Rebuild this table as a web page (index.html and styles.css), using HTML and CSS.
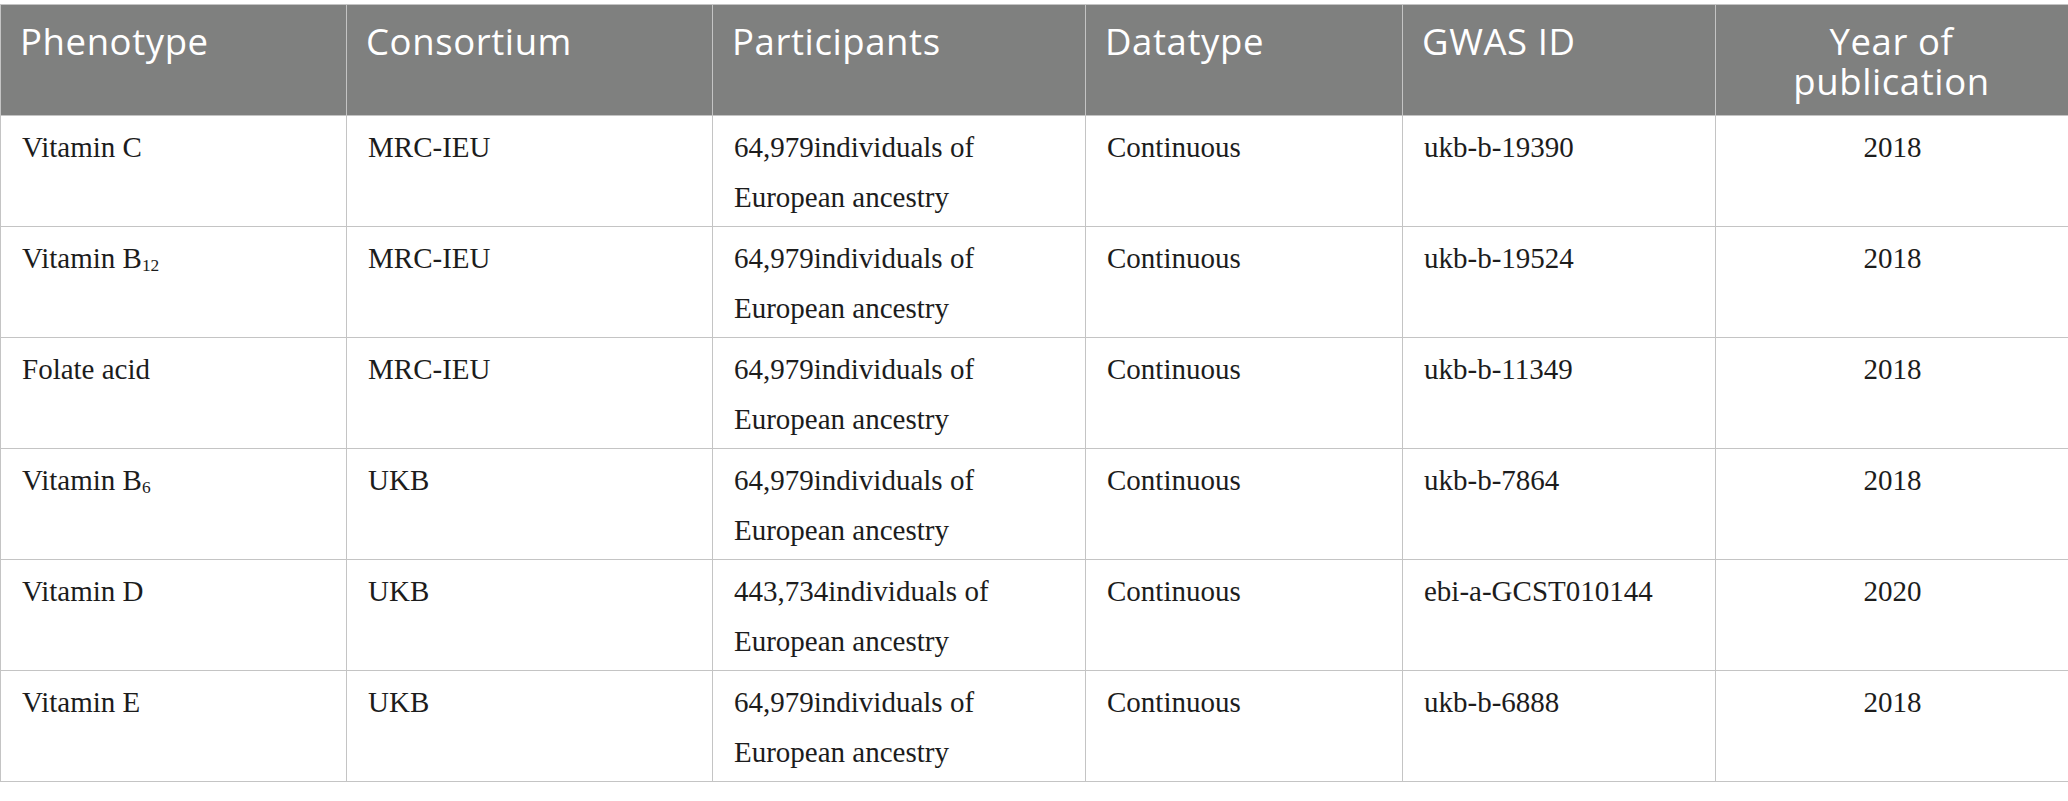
FILE: index.html
```html
<!DOCTYPE html>
<html lang="en">
<head>
<meta charset="utf-8">
<title>GWAS data sources</title>
<link rel="stylesheet" href="styles.css">
</head>
<body>
<div class="wrap">
<table class="data">
  <colgroup>
    <col class="c1"><col class="c2"><col class="c3"><col class="c4"><col class="c5"><col class="c6">
  </colgroup>
  <thead>
    <tr>
      <th>Phenotype</th>
      <th>Consortium</th>
      <th>Participants</th>
      <th>Datatype</th>
      <th>GWAS ID</th>
      <th class="center">Year of publication</th>
    </tr>
  </thead>
  <tbody>
    <tr>
      <td>Vitamin C</td>
      <td>MRC-IEU</td>
      <td>64,979individuals of European ancestry</td>
      <td>Continuous</td>
      <td>ukb-b-19390</td>
      <td class="center">2018</td>
    </tr>
    <tr>
      <td>Vitamin B<sub>12</sub></td>
      <td>MRC-IEU</td>
      <td>64,979individuals of European ancestry</td>
      <td>Continuous</td>
      <td>ukb-b-19524</td>
      <td class="center">2018</td>
    </tr>
    <tr>
      <td>Folate acid</td>
      <td>MRC-IEU</td>
      <td>64,979individuals of European ancestry</td>
      <td>Continuous</td>
      <td>ukb-b-11349</td>
      <td class="center">2018</td>
    </tr>
    <tr>
      <td>Vitamin B<sub>6</sub></td>
      <td>UKB</td>
      <td>64,979individuals of European ancestry</td>
      <td>Continuous</td>
      <td>ukb-b-7864</td>
      <td class="center">2018</td>
    </tr>
    <tr>
      <td>Vitamin D</td>
      <td>UKB</td>
      <td>443,734individuals of European ancestry</td>
      <td>Continuous</td>
      <td>ebi-a-GCST010144</td>
      <td class="center">2020</td>
    </tr>
    <tr>
      <td>Vitamin E</td>
      <td>UKB</td>
      <td>64,979individuals of European ancestry</td>
      <td>Continuous</td>
      <td>ukb-b-6888</td>
      <td class="center">2018</td>
    </tr>
  </tbody>
</table>
</div>
</body>
</html>
```
FILE: styles.css
```css
html, body {
  margin: 0;
  padding: 0;
  background: #ffffff;
}
.wrap {
  padding-top: 4px;
}
.data {
  width: 2068px;
  table-layout: fixed;
  border-collapse: collapse;
}
.c1 { width: 346px; }
.c2 { width: 366px; }
.c3 { width: 373px; }
.c4 { width: 317px; }
.c5 { width: 313px; }
.c6 { width: 353px; }

.data th,
.data td {
  border: 1px solid #c4c4c4;
  vertical-align: top;
  text-align: left;
}
.data th {
  background: #7f807f;
  color: #ffffff;
  font-family: "Open Sans", "Noto Sans", sans-serif;
  font-weight: 400;
  font-size: 36.5px;
  letter-spacing: 0.6px;
  line-height: 40px;
  padding: 16px 20px 14px 19px;
}
.data td {
  color: #1c1c1c;
  font-family: "Liberation Serif", "Times New Roman", serif;
  font-size: 29px;
  line-height: 50px;
  padding: 6px 20px 4px 21px;
  height: 100px;
  box-sizing: content-box;
}
.data .center {
  text-align: center;
}
.data sub {
  font-size: 0.6em;
  line-height: 0;
  vertical-align: -0.16em;
}
```
